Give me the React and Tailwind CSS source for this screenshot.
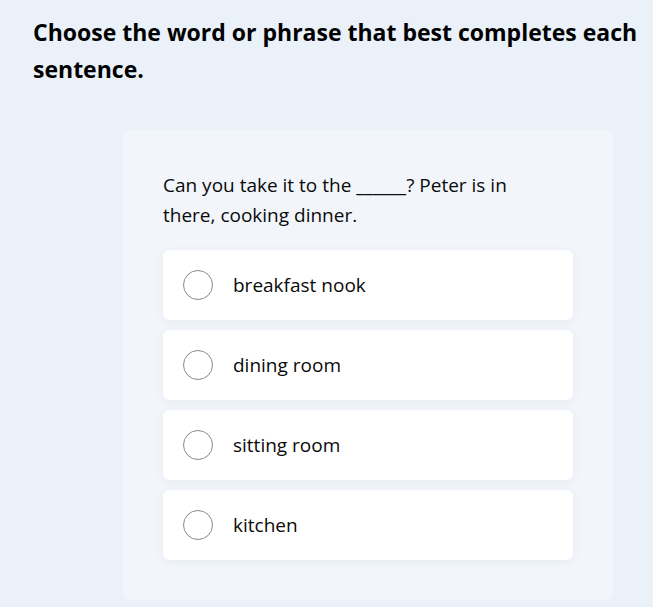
import React, { useState } from 'react';

const options = ['breakfast nook', 'dining room', 'sitting room', 'kitchen'];

const App = () => {
    const [selected, setSelected] = useState(null);

    return (
        <div className="min-h-[607px] w-full bg-[#eaf1f9] font-['Open_Sans',sans-serif] text-[#0a0a0a]">
            <div className="pl-[33px] pt-[14px] pr-[10px]">
                <h1 className="max-w-[610px] text-[23px] font-bold leading-[37px] text-black">
                    Choose the word or phrase that best completes each sentence.
                </h1>
            </div>

            <div className="mt-[42px] ml-[123px] w-[490px] rounded-md bg-[#f2f6fb] px-10 pt-10 pb-10">
                <p className="pr-6 text-[19px] leading-[30px]">
                    Can you take it to the ______? Peter is in there, cooking dinner.
                </p>

                <div className="mt-5 flex flex-col gap-[10px]">
                    {options.map((option, index) => (
                        <button
                            key={index}
                            type="button"
                            onClick={() => setSelected(index)}
                            className="flex h-[70px] items-center rounded-md bg-white pl-5 text-left shadow-[0_2px_10px_rgba(30,60,110,0.06)]"
                        >
                            <span className="flex h-[30px] w-[30px] shrink-0 items-center justify-center rounded-full border border-[#8a8a8a]">
                                {selected === index && <span className="h-4 w-4 rounded-full bg-[#2563eb]" />}
                            </span>
                            <span className="ml-5 text-[19px]">{option}</span>
                        </button>
                    ))}
                </div>
            </div>
        </div>
    );
};

export default App;
